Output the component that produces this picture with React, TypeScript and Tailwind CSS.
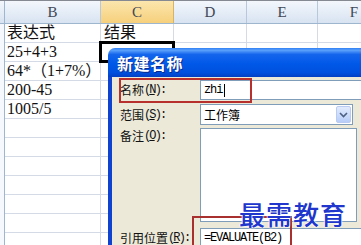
import React from "react";

const cellFont = {
  fontFamily: '"Liberation Serif", "Noto Sans CJK SC", serif',
};
const uiFont = {
  fontFamily: '"Noto Sans CJK SC", "Liberation Sans", sans-serif',
};
const monoFont = {
  fontFamily: '"Liberation Mono", "Noto Sans CJK SC", monospace',
};

const rows: [string, string][] = [
  ["表达式", "结果"],
  ["25+4+3", ""],
  ["64*（1+7%）", ""],
  ["200-45", ""],
  ["1005/5", ""],
  ["", ""],
  ["", ""],
  ["", ""],
  ["", ""],
  ["", ""],
  ["", ""],
  ["", ""],
];

function Label({ main, k }: { main: string; k: string }) {
  return (
    <div
      className="flex w-[80px] shrink-0 items-center whitespace-nowrap text-[12px] leading-[12px] text-[#111]"
      style={uiFont}
    >
      <span className="leading-[12px]">{main}</span>
      <span className="leading-[12px] tracking-[-1.9px]" style={monoFont}>
        (<span className="underline">{k}</span>):
      </span>
    </div>
  );
}

export default function App() {
  return (
    <div className="relative h-[245px] w-[361px] overflow-hidden bg-white">
      {/* Spreadsheet */}
      <div className="flex flex-col border-t border-[#858a92]">
        <div
          className="flex h-[23px] border-b border-[#9eb6ce] bg-gradient-to-b from-[#f3f7fc] to-[#d8e3f1] text-[15px] text-[#3f4756]"
          style={cellFont}
        >
          <div className="w-[5px] shrink-0 border-r border-[#9eb6ce]" />
          <div className="flex w-[96px] shrink-0 items-center justify-center border-r border-[#b7c8dc]">B</div>
          <div className="flex w-[73px] shrink-0 items-center justify-center border-r border-[#d8b366] bg-gradient-to-b from-[#fbe6ad] to-[#f6d07c]">C</div>
          <div className="flex w-[73px] shrink-0 items-center justify-center border-r border-[#b7c8dc]">D</div>
          <div className="flex w-[71px] shrink-0 items-center justify-center border-r border-[#b7c8dc]">E</div>
          <div className="flex w-[73px] shrink-0 items-center justify-center border-r border-[#b7c8dc]">F</div>
        </div>
        {rows.map((r, i) => (
          <div key={i} className="flex h-[19px] text-[16px] leading-[18px] text-[#111]" style={cellFont}>
            <div className="w-[5px] shrink-0 border-r border-[#9eb6ce] bg-[#f5f8fc]" />
            <div className="flex w-[96px] shrink-0 items-center whitespace-nowrap border-b border-r border-[#d4dbe6] pl-[2px]">
              {r[0]}
            </div>
            <div className="relative flex w-[73px] shrink-0 items-center whitespace-nowrap border-b border-r border-[#d4dbe6] pl-[3px]">
              {r[1]}
              {i === 1 && (
                <div className="absolute -left-[2px] -top-[2px] h-[22px] w-[76px] border-[3px] border-black" />
              )}
            </div>
            <div className="w-[73px] shrink-0 border-b border-r border-[#d4dbe6]" />
            <div className="w-[71px] shrink-0 border-b border-r border-[#d4dbe6]" />
            <div className="w-[73px] shrink-0 border-b border-r border-[#d4dbe6]" />
          </div>
        ))}
      </div>

      {/* Dialog */}
      <div className="absolute left-[108px] top-[48px] flex h-[210px] w-[265px] flex-col overflow-hidden rounded-tl-[7px]">
        <div className="flex h-[29px] shrink-0 items-center pl-[9px] bg-[linear-gradient(to_bottom,#2f7ff5_0%,#5aa0fb_8%,#1565ec_22%,#0058e8_55%,#0050de_85%,#0340c4_100%)]">
          <span
            className="text-[16px] font-bold leading-none tracking-[0.5px] text-white [text-shadow:1px_1px_0_#0b2b8c]"
            style={uiFont}
          >
            新建名称
          </span>
        </div>
        <div className="relative flex flex-1 flex-col border-l-4 border-[#0f42cf] bg-[#ece9d8] pl-[8px] pt-[3px]">
          {/* Row 1 */}
          <div className="flex h-[20px] items-center">
            <Label main="名称" k="N" />
            <div className="flex h-[20px] flex-1 items-center border border-[#7f9db9] bg-white pl-[3px]">
              <span className="text-[12px] tracking-[-1.1px] text-black" style={monoFont}>
                zhi
              </span>
              <span className="ml-[2px] h-[13px] w-[1px] bg-black" />
            </div>
          </div>
          {/* Row 2 */}
          <div className="mt-[4px] flex h-[21px] items-center">
            <Label main="范围" k="S" />
            <div className="flex h-[21px] w-[153px] items-center justify-between border border-[#7f9db9] bg-white pl-[3px] pr-[1px]">
              <span className="text-[12px] leading-none text-black" style={uiFont}>
                工作簿
              </span>
              <div className="flex h-[17px] w-[15px] items-center justify-center rounded-[2px] border border-[#b9cbf3] bg-gradient-to-b from-[#e2ebfd] to-[#b7cdf8]">
                <svg width="9" height="6" viewBox="0 0 9 6">
                  <path d="M1 1 L4.5 4.5 L8 1" fill="none" stroke="#4d6185" strokeWidth="1.6" />
                </svg>
              </div>
            </div>
          </div>
          {/* Row 3 */}
          <div className="mt-[3px] flex items-start">
            <div className="pt-[2px]">
              <Label main="备注" k="O" />
            </div>
            <div className="h-[94px] w-[157px] border border-[#7f9db9] bg-white" />
          </div>
          {/* Row 4 */}
          <div className="mt-[6px] flex h-[20px] items-center">
            <Label main="引用位置" k="R" />
            <div className="flex h-[20px] flex-1 items-center border border-[#7f9db9] bg-white pl-[3px]">
              <span className="text-[12px] leading-[14px] tracking-[-1.2px] text-black" style={monoFont}>
                =EVALUATE(B2)
              </span>
            </div>
          </div>

          {/* Red annotation boxes */}
          <div className="pointer-events-none absolute left-[7px] top-[1px] h-[25px] w-[133px] border-2 border-[#b8302e]" />
          <div className="pointer-events-none absolute left-[80px] top-[139px] h-[50px] w-[100px] border-2 border-[#a8302e]" />

          {/* Watermark */}
          <div
            className="pointer-events-none absolute left-[127px] top-[123px] whitespace-nowrap text-[26px] font-medium leading-[28px] tracking-[1px] text-[#2036cc] [text-shadow:0_0_2px_#fff,0_0_2px_#fff,0_0_1px_#fff]"
            style={uiFont}
          >
            最需教育
          </div>
        </div>
      </div>
    </div>
  );
}
